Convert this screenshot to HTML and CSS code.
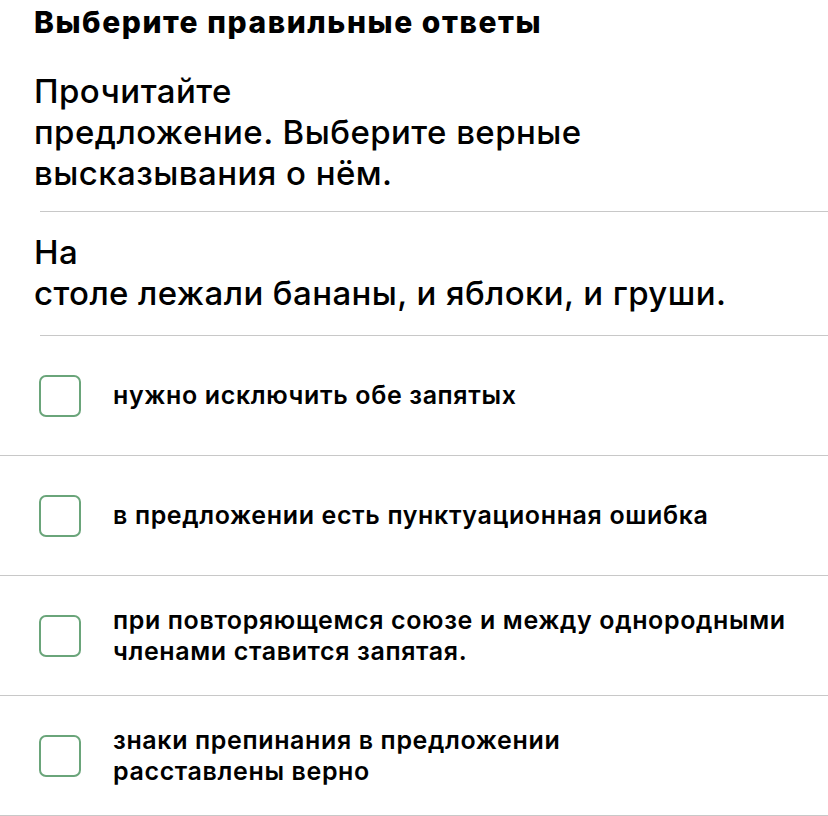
FILE: index.html
```html
<!DOCTYPE html>
<html lang="ru">
<head>
<meta charset="utf-8">
<title>Выберите правильные ответы</title>
<link rel="stylesheet" href="styles.css">
</head>
<body>
<main class="page">
  <h1 class="title">Выберите правильные ответы</h1>
  <p class="prompt">Прочитайте<br>предложение. Выберите верные высказывания о нём.</p>
  <hr class="divider">
  <p class="sentence">На<br>столе лежали бананы, и яблоки, и груши.</p>
  <hr class="divider">
  <ul class="options">
    <li class="option"><span class="check"></span><span class="option-text">нужно исключить обе запятых</span></li>
    <li class="option"><span class="check"></span><span class="option-text">в предложении есть пунктуационная ошибка</span></li>
    <li class="option"><span class="check"></span><span class="option-text">при повторяющемся союзе и между однородными членами ставится запятая.</span></li>
    <li class="option"><span class="check"></span><span class="option-text">знаки препинания в предложении<br>расставлены верно</span></li>
  </ul>
</main>
</body>
</html>
```
FILE: styles.css
```css
* { box-sizing: border-box; }
html, body {
  margin: 0;
  padding: 0;
  background: #ffffff;
}
body {
  font-family: Inter, "Noto Sans", Roboto, sans-serif;
  color: #000000;
  width: 828px;
  height: 816px;
  overflow: hidden;
}
.page {
  display: flex;
  flex-direction: column;
}
.title {
  margin: 4px 0 0 0;
  padding-left: 34px;
  font-size: 30px;
  line-height: 36px;
  font-weight: 800;
  letter-spacing: 1.55px;
}
.prompt {
  margin: 31px 0 0 0;
  padding-left: 34px;
  padding-right: 200px;
  font-size: 33px;
  line-height: 41px;
  font-weight: 500;
  letter-spacing: 0.45px;
}
.divider {
  margin: 0 0 0 40px;
  border: 0;
  height: 1px;
  background: #c8c8c8;
}
.prompt + .divider { margin-top: 17px; }
.sentence {
  margin: 0;
  padding: 20px 0 21px 34px;
  font-size: 33px;
  line-height: 41px;
  font-weight: 500;
  letter-spacing: 0.4px;
}
.options {
  list-style: none;
  margin: 0;
  padding: 0;
}
.option {
  display: flex;
  align-items: center;
  gap: 32px;
  height: 120px;
  padding-left: 39px;
  border-bottom: 1px solid #c8c8c8;
}
.check {
  flex: none;
  width: 42px;
  height: 42px;
  border: 2px solid #6aa57a;
  border-radius: 7px;
}
.option-text {
  font-size: 25px;
  line-height: 31px;
  font-weight: 600;
  letter-spacing: 0.63px;
  padding-right: 30px;
}
```
